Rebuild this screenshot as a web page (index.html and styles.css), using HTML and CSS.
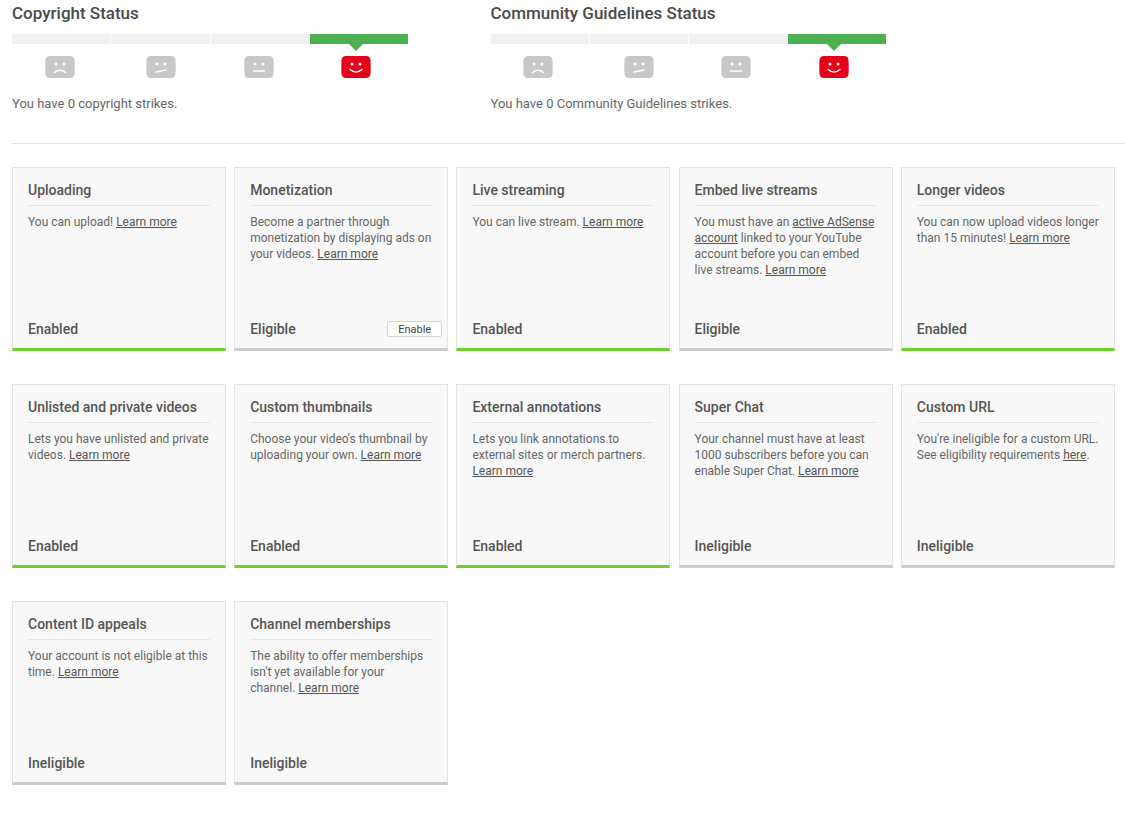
FILE: index.html
```html
<!DOCTYPE html>
<html lang="en" dir="ltr">
<head>
  <meta charset="UTF-8" />
  <title>Channel Status and Features</title>
  <link rel="stylesheet" href="styles.css">
</head>
<body>

  <svg class="defs" width="0" height="0">
    <symbol id="face-base" viewBox="0 0 30 22">
      <path d="M5 0h20q4 0 4.500 4q.5 7 0 14q-.5 4-4.500 4H5q-4 0-4.500-4q-.5-7 0-14Q1 0 5 0z" />
      <circle cx="11" cy="8" r="1.500" fill="#fff" />
      <circle cx="19" cy="8" r="1.500" fill="#fff" />
    </symbol>
  </svg>

  <div class="status-row">
    <section class="status">
      <h2>Copyright Status</h2>
      <div class="meter">
        <div class="step">
          <svg class="face" width="30" height="22" viewBox="0 0 30 22"><use href="#face-base" /><path class="mouth" d="M9.500 16.500q5.500-4.500 11 0" /></svg>
        </div>
        <div class="step">
          <svg class="face" width="30" height="22" viewBox="0 0 30 22"><use href="#face-base" /><path class="mouth" d="M10 16l10-2" /></svg>
        </div>
        <div class="step">
          <svg class="face" width="30" height="22" viewBox="0 0 30 22"><use href="#face-base" /><path class="mouth" d="M9.500 15h11" /></svg>
        </div>
        <div class="step current">
          <svg class="face" width="30" height="22" viewBox="0 0 30 22"><use href="#face-base" /><path class="mouth" d="M9 13.500q6 5 12 0" /></svg>
        </div>
      </div>
      <p>You have 0 copyright strikes.</p>
    </section>

    <section class="status">
      <h2>Community Guidelines Status</h2>
      <div class="meter">
        <div class="step">
          <svg class="face" width="30" height="22" viewBox="0 0 30 22"><use href="#face-base" /><path class="mouth" d="M9.500 16.500q5.500-4.500 11 0" /></svg>
        </div>
        <div class="step">
          <svg class="face" width="30" height="22" viewBox="0 0 30 22"><use href="#face-base" /><path class="mouth" d="M10 16l10-2" /></svg>
        </div>
        <div class="step">
          <svg class="face" width="30" height="22" viewBox="0 0 30 22"><use href="#face-base" /><path class="mouth" d="M9.500 15h11" /></svg>
        </div>
        <div class="step current">
          <svg class="face" width="30" height="22" viewBox="0 0 30 22"><use href="#face-base" /><path class="mouth" d="M9 13.500q6 5 12 0" /></svg>
        </div>
      </div>
      <p>You have 0 Community Guidelines strikes.</p>
    </section>
  </div>

  <div class="features">
    <div class="card on">
      <h3>Uploading</h3>
      <p class="text">You can upload! <a href="#">Learn more</a></p>
      <div class="foot">Enabled</div>
    </div>
    <div class="card">
      <h3>Monetization</h3>
      <p class="text">Become a partner through monetization by displaying ads on your videos. <a href="#">Learn more</a></p>
      <div class="foot">Eligible <button type="button">Enable</button></div>
    </div>
    <div class="card on">
      <h3>Live streaming</h3>
      <p class="text">You can live stream. <a href="#">Learn more</a></p>
      <div class="foot">Enabled</div>
    </div>
    <div class="card">
      <h3>Embed live streams</h3>
      <p class="text">You must have an <a href="#">active AdSense account</a> linked to your YouTube account before you can embed live streams. <a href="#">Learn more</a></p>
      <div class="foot">Eligible</div>
    </div>
    <div class="card on">
      <h3>Longer videos</h3>
      <p class="text">You can now upload videos longer than 15 minutes! <a href="#">Learn more</a></p>
      <div class="foot">Enabled</div>
    </div>

    <div class="card on">
      <h3>Unlisted and private videos</h3>
      <p class="text">Lets you have unlisted and private videos. <a href="#">Learn more</a></p>
      <div class="foot">Enabled</div>
    </div>
    <div class="card on">
      <h3>Custom thumbnails</h3>
      <p class="text">Choose your video's thumbnail by uploading your own. <a href="#">Learn more</a></p>
      <div class="foot">Enabled</div>
    </div>
    <div class="card on">
      <h3>External annotations</h3>
      <p class="text">Lets you link annotations to external sites or merch partners. <a href="#">Learn more</a></p>
      <div class="foot">Enabled</div>
    </div>
    <div class="card">
      <h3>Super Chat</h3>
      <p class="text">Your channel must have at least 1000 subscribers before you can enable Super Chat. <a href="#">Learn more</a></p>
      <div class="foot">Ineligible</div>
    </div>
    <div class="card">
      <h3>Custom URL</h3>
      <p class="text">You're ineligible for a custom URL. See eligibility requirements <a href="#">here</a>.</p>
      <div class="foot">Ineligible</div>
    </div>

    <div class="card">
      <h3>Content ID appeals</h3>
      <p class="text">Your account is not eligible at this time. <a href="#">Learn more</a></p>
      <div class="foot">Ineligible</div>
    </div>
    <div class="card">
      <h3>Channel memberships</h3>
      <p class="text">The ability to offer memberships isn't yet available for your channel. <a href="#">Learn more</a></p>
      <div class="foot">Ineligible</div>
    </div>
  </div>

</body>
</html>
```

FILE: styles.css
```css
body {
  margin: 0;
  height: 834px;
  overflow: hidden;
  background: #fff;
  font-family: Roboto, "Liberation Sans", sans-serif;
  color: #555;
}

.defs {
  position: absolute;
}

.status-row {
  display: flex;
  gap: 82.500px;
  margin-left: 12px;
  padding-bottom: 30px;
  border-bottom: 1px solid #e2e2e2;
}

.status {
  width: 396px;
}

.status h2 {
  margin: 4px 0 0;
  font-size: 17px;
  line-height: 18px;
  font-weight: 500;
  color: #4a4a4a;
}

.status p {
  margin: 17px 0 0;
  font-size: 13px;
  line-height: 18px;
  color: #666;
}

.meter {
  display: flex;
  gap: 1px;
  margin-top: 12px;
}

.status + .status .meter {
  margin-right: .5px;
}

.step {
  position: relative;
  flex: 1;
  display: flex;
  flex-direction: column;
  align-items: center;
}

.step::before {
  content: "";
  align-self: stretch;
  height: 10px;
  margin-bottom: 12px;
  background: #f1f1f1;
}

.face {
  display: block;
  fill: #c8c8c8;
}

.step:nth-child(1) .face,
.step:nth-child(3) .face {
  margin-right: 2px;
}

.step:nth-child(2) .face {
  margin-left: 2px;
}

.status + .status .step:nth-child(1) .face,
.status + .status .step:nth-child(3) .face {
  margin-right: 4px;
}

.status + .status .step:nth-child(2) .face {
  margin-left: 0;
}

.mouth {
  fill: none;
  stroke: #fff;
  stroke-width: 1.500;
  stroke-linecap: round;
}

.step.current::before {
  background: #4caf50;
}

.step.current .face {
  margin-right: 6px;
  fill: #e60019;
}

/* little pointer under the green segment */
.step.current::after {
  content: "";
  position: absolute;
  top: 10px;
  left: 39px;
  border-left: 7px solid transparent;
  border-right: 7px solid transparent;
  border-top: 7px solid #4caf50;
}

.features {
  display: grid;
  grid-template-columns: repeat(5, 1fr);
  column-gap: 8.200px;
  row-gap: 33px;
  width: 1102.800px;
  margin: 23px 0 0 12px;
}

.card {
  display: flex;
  flex-direction: column;
  box-sizing: border-box;
  height: 184px;
  padding: 13px 15px 0;
  background: #f8f8f8;
  border: 1px solid #e4e4e4;
  border-bottom: 3px solid #ccc;
}

.card.on {
  border-bottom-color: #6cd12e;
}

.card h3 {
  margin: 0;
  padding-bottom: 6px;
  border-bottom: 1px solid #e6e6e6;
  font-size: 14px;
  line-height: 18px;
  font-weight: 500;
  color: #555;
}

.text {
  flex: 1;
  margin: 8px 0 0;
  font-size: 12px;
  line-height: 16px;
  color: #666;
}

.text a {
  color: #555;
  text-decoration: underline;
}

.foot {
  display: flex;
  justify-content: space-between;
  align-items: center;
  height: 18px;
  margin-right: -10px;
  padding-bottom: 10px;
  font-size: 14px;
  font-weight: 500;
  color: #555;
}

.foot button {
  box-sizing: border-box;
  width: 55px;
  height: 16px;
  padding: 0;
  background: #fff;
  border: 1px solid #d3d3d3;
  border-radius: 2px;
  font-family: inherit;
  font-size: 11px;
  color: #444;
}
```
